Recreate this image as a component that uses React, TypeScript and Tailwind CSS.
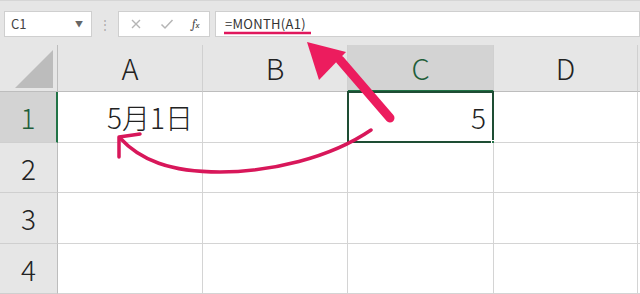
const cols = [
  { label: "A", w: "w-[145px]" },
  { label: "B", w: "w-[145px]" },
  { label: "C", w: "w-[146px]" },
  { label: "D", w: "w-[144px]" },
];

const rows = [
  { label: "1", h: "h-[51px]" },
  { label: "2", h: "h-[50px]" },
  { label: "3", h: "h-[51px]" },
  { label: "4", h: "h-[50px]" },
];

const font = { fontFamily: '"Noto Sans CJK JP", "Noto Sans", sans-serif' };

const FormulaBar = () => {
  return (
    <div className="flex h-[45px] items-start gap-0 bg-[#e6e6e6] pt-[10px] border-t border-[#d6d6d6]">
      <div className="ml-[4px] flex h-[26px] w-[88px] items-center justify-between border border-[#cfcfcf] bg-white pl-[6px] pr-[8px] text-[13px] text-[#444]">
        <span>C1</span>
        <span className="text-[8px] text-[#666]">▼</span>
      </div>
      <div className="flex h-[26px] w-[26px] items-center justify-center text-[12px] text-[#aaa]">⋮</div>
      <div className="flex h-[26px] w-[92px] items-center border border-[#cfcfcf] bg-white pl-[10px] text-[#b0b0b0]">
        <svg width="12" height="12" viewBox="0 0 12 12" className="ml-[1px]">
          <path d="M2 2 L10 10 M10 2 L2 10" stroke="#b5b5b5" strokeWidth="1.4" fill="none" />
        </svg>
        <svg width="14" height="12" viewBox="0 0 14 12" className="ml-[18px]">
          <path d="M1.5 6.5 L5 10 L12.5 2" stroke="#b5b5b5" strokeWidth="1.5" fill="none" />
        </svg>
        <span className="ml-[18px] font-serif text-[12px] italic text-[#444]">
          f<span className="text-[9px]">x</span>
        </span>
      </div>
      <div className="ml-[5px] flex h-[26px] flex-1 items-center border border-[#cfcfcf] bg-white pl-[9px] text-[13px] tracking-[0.3px] text-[#333]">
        =MONTH(A1)
      </div>
    </div>
  );
};

const Sheet = () => {
  return (
    <div className="flex flex-col" style={font}>
      <div className="flex h-[47px]">
        <div className="relative w-[58px] shrink-0 border-r border-b border-[#bdbdbd] bg-[#e6e6e6]">
          <svg width="58" height="47" className="absolute left-0 top-0">
            <polygon points="15,43 53,5 53,43" fill="#bcbcbc" />
          </svg>
        </div>
        {cols.map((c) => (
          <div
            key={c.label}
            className={`${c.w} shrink-0 flex items-center justify-center border-r border-[#d0d0d0] text-[29px] font-light ${
              c.label === "C"
                ? "bg-[#d3d3d3] text-[#1f5e3a] border-b-2 border-b-[#217346]"
                : "bg-[#e6e6e6] text-[#222] border-b border-b-[#bdbdbd]"
            }`}
          >
            {c.label}
          </div>
        ))}
        <div className="flex-1 bg-[#e6e6e6] border-b border-[#bdbdbd]" />
      </div>
      {rows.map((r) => (
        <div key={r.label} className={`flex ${r.h}`}>
          <div
            className={`w-[58px] shrink-0 flex items-center justify-center border-b border-[#cfcfcf] text-[28px] font-light ${
              r.label === "1"
                ? "bg-[#d3d3d3] text-[#1f5e3a] border-r-2 border-r-[#217346]"
                : "bg-[#e6e6e6] text-[#222] border-r border-r-[#bdbdbd]"
            }`}
          >
            {r.label}
          </div>
          {cols.map((c) => (
            <div
              key={c.label}
              className={`${c.w} shrink-0 relative flex items-center justify-end border-r border-b border-[#d4d4d4] bg-white pr-[7px] text-[28px] font-light text-[#222]`}
            >
              {r.label === "1" && c.label === "A" && <span className="mr-[2px]">5月1日</span>}
              {r.label === "1" && c.label === "C" && (
                <>
                  <span>5</span>
                  <div className="absolute -left-px -top-px -right-px -bottom-px border-2 border-[#1e4d34]" />
                  <div className="absolute -right-[4px] -bottom-[4px] h-[6px] w-[6px] border border-white bg-[#217346]" />
                </>
              )}
            </div>
          ))}
          <div className="flex-1 border-b border-[#d4d4d4] bg-white" />
        </div>
      ))}
    </div>
  );
};

const Arrows = () => {
  return (
    <svg width="640" height="294" className="pointer-events-none absolute left-0 top-0">
      <line x1="224" y1="33" x2="311" y2="33" stroke="#e0175c" strokeWidth="2.5" />
      <path d="M390 118 L340 60" stroke="#ec1c5e" strokeWidth="9" strokeLinecap="round" />
      <polygon points="307,42 346,52 319,80" fill="#ec1c5e" />
      <path
        d="M371 130 C330 158 270 172 220 172 C170 172 140 160 120 138"
        stroke="#d8175a"
        strokeWidth="3.5"
        fill="none"
        strokeLinecap="round"
      />
      <path d="M140 134 L119 137 L119 157" stroke="#d8175a" strokeWidth="3.5" fill="none" strokeLinecap="round" strokeLinejoin="round" />
    </svg>
  );
};

export default function App() {
  return (
    <div className="relative h-[294px] w-[640px] overflow-hidden bg-white" style={font}>
      <FormulaBar />
      <Sheet />
      <Arrows />
    </div>
  );
}
